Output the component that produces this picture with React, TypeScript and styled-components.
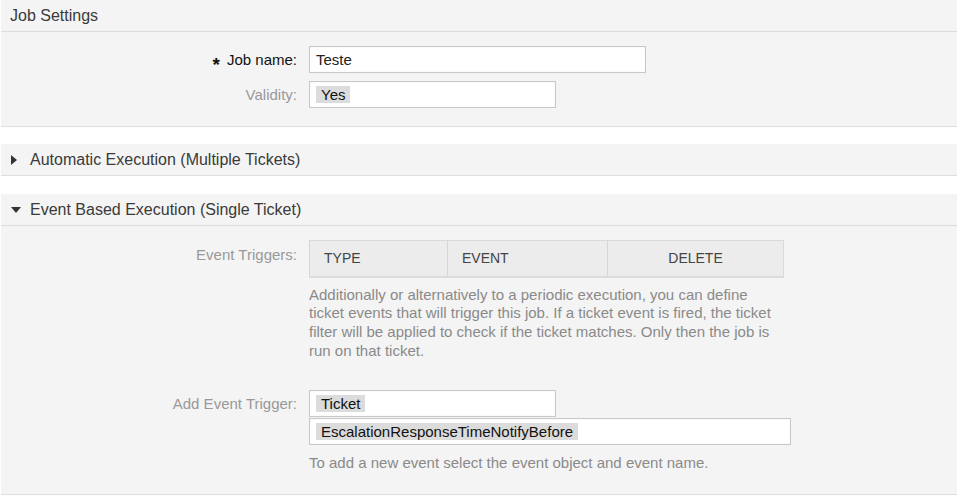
import React from 'react'
import styled, { createGlobalStyle } from 'styled-components'

const GlobalStyle = createGlobalStyle`
  html, body {
    margin: 0;
    padding: 0;
    background: #fff;
    font-family: 'Liberation Sans', Arial, sans-serif;
    color: #333;
  }
`

const Page = styled.div`
  padding-left: 1px;
`

const Widget = styled.section`
  background: #f4f4f4;
  border-bottom: 1px solid #dedede;
  margin-bottom: ${(p) => p.$gap ?? 17}px;
`

const Header = styled.div`
  height: 31px;
  display: flex;
  align-items: center;
  gap: 8px;
  padding-left: ${(p) => (p.$toggle ? 10 : 9)}px;
  font-size: 16px;
  color: #3a3a3a;
  border-bottom: ${(p) => (p.$open ? '1px solid #dcdcdc' : 'none')};
`

const Toggle = styled.span`
  width: 11px;
  display: flex;
  align-items: center;
  justify-content: flex-start;
`

const Content = styled.div`
  padding: 14px 0 ${(p) => p.$bottom ?? 18}px;
`

const Row = styled.div`
  display: grid;
  grid-template-columns: 296px 1fr;
  column-gap: 12px;
  align-items: start;
  margin-bottom: ${(p) => p.$gap ?? 0}px;
`

const Label = styled.label`
  display: flex;
  justify-content: flex-end;
  align-items: center;
  height: 27px;
  font-size: 15px;
  color: ${(p) => (p.$mandatory ? '#111' : '#999')};
  padding-top: ${(p) => p.$offset ?? 0}px;
`

const Marker = styled.span`
  font-weight: bold;
  font-size: 19px;
  line-height: 19px;
  margin: 9px 7px 0 0;
`

const Field = styled.div`
  display: flex;
  flex-direction: column;
  align-items: flex-start;
`

const TextInput = styled.input`
  box-sizing: border-box;
  width: ${(p) => p.$width}px;
  height: 27px;
  border: 1px solid #c8c8c8;
  background: #fff;
  box-shadow: inset 0 0 2px #eee;
  padding: 0 6px;
  margin: 0;
  font-family: inherit;
  font-size: 15px;
  color: #222;
  outline: none;
`

const SelectBox = styled.div`
  box-sizing: border-box;
  width: ${(p) => p.$width}px;
  height: 27px;
  border: 1px solid #c8c8c8;
  background: #fff;
  box-shadow: inset 0 0 2px #eee;
  display: flex;
  align-items: center;
  padding-left: 6px;
  margin-bottom: ${(p) => p.$gap ?? 0}px;
`

const Tag = styled.span`
  background: #dcdcdc;
  color: #111;
  font-size: 15px;
  line-height: 17px;
  padding: 0 5px;
`

const Table = styled.table`
  width: 475px;
  border-collapse: collapse;
  border: 1px solid #dadada;
  border-bottom: 2px solid #dcdcdc;
  background: #ececec;
`

const Th = styled.th`
  height: 36px;
  padding: 0 14px;
  font-weight: normal;
  font-size: 14px;
  color: #444;
  text-transform: uppercase;
  text-align: ${(p) => p.$align ?? 'left'};
  width: ${(p) => p.$width}px;
  border-left: 1px solid #d6d6d6;
  box-sizing: border-box;
`

const Description = styled.p`
  margin: ${(p) => p.$top ?? 8}px 0 0;
  width: 475px;
  font-size: 15px;
  line-height: 18.75px;
  color: #8a8a8a;
`

const Caret = ({ open }) =>
  open ? (
    <svg width="10" height="6" viewBox="0 0 10 6">
      <path d="M0 0 L10 0 L5 6 Z" fill="#333" />
    </svg>
  ) : (
    <svg width="6" height="10" viewBox="0 0 6 10">
      <path d="M0 0 L6 5 L0 10 Z" fill="#333" />
    </svg>
  )

export default function App() {
  return (
    <Page>
      <GlobalStyle />

      {/* Job Settings */}
      <Widget>
        <Header $open>Job Settings</Header>
        <Content>
          <Row $gap={8}>
            <Label $mandatory>
              <Marker>*</Marker>Job name:
            </Label>
            <Field>
              <TextInput $width={337} value="Teste" readOnly />
            </Field>
          </Row>
          <Row>
            <Label>Validity:</Label>
            <Field>
              <SelectBox $width={247}>
                <Tag>Yes</Tag>
              </SelectBox>
            </Field>
          </Row>
        </Content>
      </Widget>

      {/* Automatic Execution */}
      <Widget $gap={18}>
        <Header $toggle>
          <Toggle>
            <Caret open={false} />
          </Toggle>
          Automatic Execution (Multiple Tickets)
        </Header>
      </Widget>

      {/* Event Based Execution */}
      <Widget>
        <Header $toggle $open>
          <Toggle>
            <Caret open />
          </Toggle>
          Event Based Execution (Single Ticket)
        </Header>
        <Content $bottom={22}>
          <Row $gap={29}>
            <Label $offset={1}>Event Triggers:</Label>
            <Field>
              <Table>
                <thead>
                  <tr>
                    <Th $width={138}>Type</Th>
                    <Th $width={160}>Event</Th>
                    <Th $align="center">Delete</Th>
                  </tr>
                </thead>
              </Table>
              <Description>
                Additionally or alternatively to a periodic execution, you can
                define ticket events that will trigger this job. If a ticket
                event is fired, the ticket filter will be applied to check if
                the ticket matches. Only then the job is run on that ticket.
              </Description>
            </Field>
          </Row>
          <Row>
            <Label>Add Event Trigger:</Label>
            <Field>
              <SelectBox $width={247} $gap={1}>
                <Tag>Ticket</Tag>
              </SelectBox>
              <SelectBox $width={482}>
                <Tag>EscalationResponseTimeNotifyBefore</Tag>
              </SelectBox>
              <Description $top={9}>
                To add a new event select the event object and event name.
              </Description>
            </Field>
          </Row>
        </Content>
      </Widget>
    </Page>
  )
}
